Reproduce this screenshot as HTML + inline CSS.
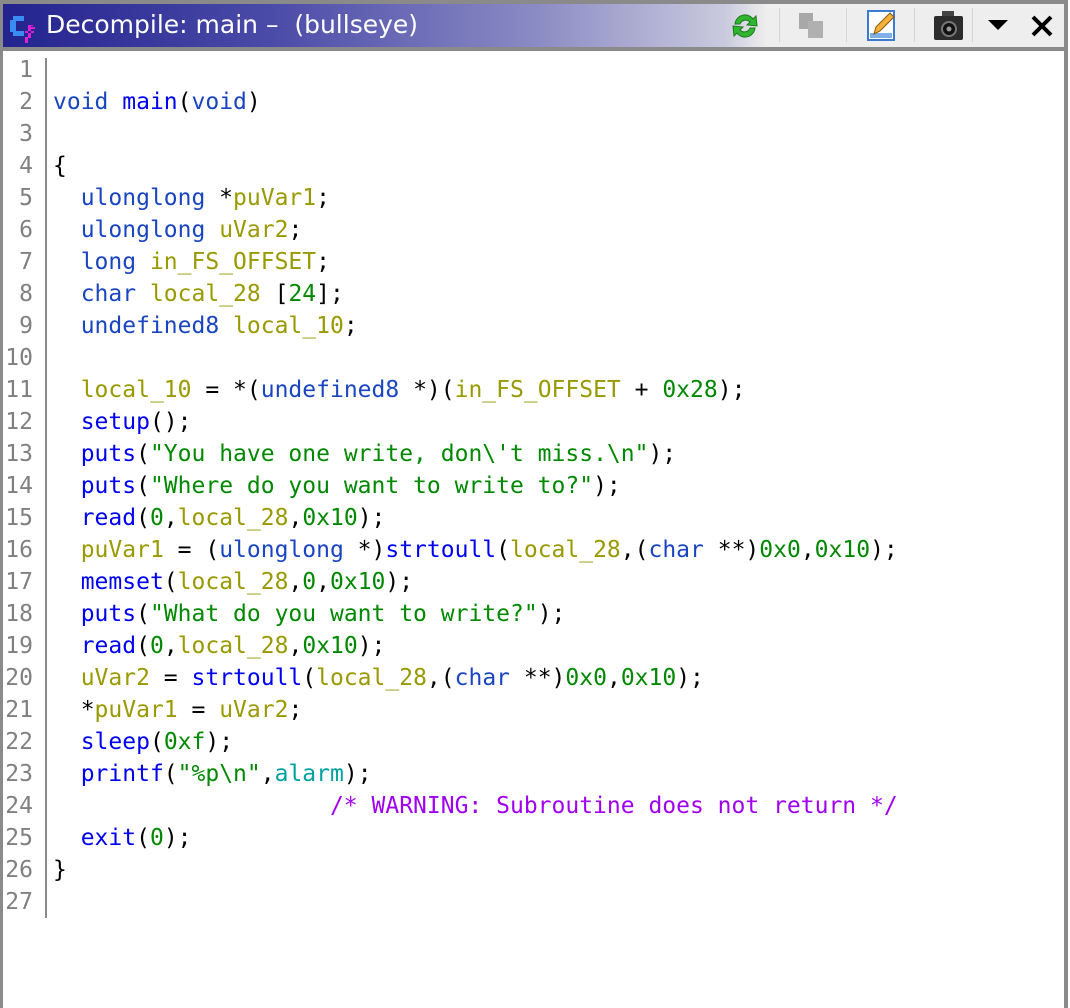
<!DOCTYPE html>
<html><head><meta charset="utf-8">
<style>
html,body{margin:0;padding:0;width:1070px;height:1008px;overflow:hidden;background:#fff;}
.frame{position:absolute;left:0;top:0;width:1070px;height:1008px;background:#fff;overflow:hidden;}
.lb{position:absolute;left:0;top:0;width:3px;height:1008px;background:#8a8a8a;}
.rb{position:absolute;left:1064px;top:0;width:4px;height:1008px;background:#8a8a8a;}
.tb{position:absolute;left:0;top:0;width:1068px;height:4px;background:#8a8a8a;}
.title{position:absolute;left:3px;top:4px;width:1061px;height:43px;
 background:linear-gradient(to right,#23238e 0%,#4a4aa8 25%,#8a8ac4 50%,#c9c9de 68%,#eeeeee 72%,#eeeeee 100%);}
.tline{position:absolute;left:0;top:47px;width:1068px;height:4px;background:#8a8a8a;}
.ttext{position:absolute;left:46px;top:10px;font:25px "DejaVu Sans","Liberation Sans",sans-serif;color:#fff;white-space:pre;line-height:30px;}
.sep{position:absolute;top:8px;width:1px;height:34px;background:#d4d4d4;}
.gutter{position:absolute;left:45px;top:58px;width:2px;height:860px;background:#8a8a8a;}
.code{position:absolute;left:0;top:54px;font:23px "DejaVu Sans Mono","Liberation Mono",monospace;line-height:32px;white-space:pre;color:#000;}
.ln{position:absolute;left:0;width:33px;text-align:right;color:#808080;}
.c{position:absolute;left:53px;}
.t{color:#1a45c0}.f{color:#0000f0}.v{color:#999900}.s{color:#008800}.n{color:#008800}.m{color:#a000f0}.g{color:#00a0a0}
</style></head><body>
<div class="frame">
<div class="title"></div>
<div class="tb"></div><div class="lb"></div><div class="rb"></div><div class="tline"></div>
<svg style="position:absolute;left:5px;top:10px" width="36" height="36" viewBox="0 0 36 36">
<path d="M19 6 H8 V10 H5 V22 H8 V26 H19 V21 H11 V11 H19 Z" fill="#3a8cf2"/>
<path d="M28 15 H23 V28 H26 V19 H30 V17 H26 V16 H28 Z M20 21 H29 V23 H20 Z M20 27 H23 V33 H20 Z" fill="#e020d8"/>
</svg>
<div class="ttext">Decompile: main –  (bullseye)</div>
<svg style="position:absolute;left:728px;top:9px" width="34" height="34" viewBox="0 0 34 34">
<path d="M7 15 A10 10 0 0 1 25 10 L28 7 L29 17 L19 16 L22 13 A6 6 0 0 0 12 15 Z" fill="#2fb52f" stroke="#1a7a1a" stroke-width="1"/>
<path d="M27 19 A10 10 0 0 1 9 24 L6 27 L5 17 L15 18 L12 21 A6 6 0 0 0 22 19 Z" fill="#2fb52f" stroke="#1a7a1a" stroke-width="1"/>
</svg>
<div class="sep" style="left:779px"></div>
<svg style="position:absolute;left:796px;top:10px" width="34" height="32" viewBox="0 0 34 32">
<rect x="3" y="3" width="14" height="16" fill="#a8a8a8"/><rect x="12" y="11" width="15" height="17" fill="#b0b0b0"/>
</svg>
<div class="sep" style="left:846px"></div>
<svg style="position:absolute;left:866px;top:8px" width="34" height="36" viewBox="0 0 34 36">
<rect x="2" y="3" width="26" height="29" fill="#ffffff" stroke="#3a7bd5" stroke-width="2"/>
<rect x="4" y="25" width="22" height="5" fill="#7fb0e8"/>
<path d="M8 26 L10 19 L24 5 L28 9 L14 23 Z" fill="#f3b23a" stroke="#8a5a10" stroke-width="1"/>
</svg>
<div class="sep" style="left:914px"></div>
<svg style="position:absolute;left:932px;top:9px" width="36" height="34" viewBox="0 0 36 34">
<rect x="10" y="2" width="12" height="6" fill="#444"/>
<rect x="2" y="7" width="29" height="24" rx="2" fill="#2c2c2c"/>
<circle cx="17" cy="20" r="7" fill="#111" stroke="#777" stroke-width="2"/>
<circle cx="17" cy="20" r="2.5" fill="#999"/>
</svg>
<div class="sep" style="left:972px"></div>
<svg style="position:absolute;left:986px;top:18px" width="24" height="14" viewBox="0 0 24 14"><path d="M2 2 H22 L12 12 Z" fill="#000"/></svg>
<svg style="position:absolute;left:1030px;top:14px" width="24" height="24" viewBox="0 0 24 24"><path d="M3 3 L21 21 M21 3 L3 21" stroke="#000" stroke-width="4"/></svg>

<div class="gutter"></div>
<div class="code">
<div class="ln" style="top:0">1</div>
<div class="ln" style="top:32px">2</div>
<div class="ln" style="top:64px">3</div>
<div class="ln" style="top:96px">4</div>
<div class="ln" style="top:128px">5</div>
<div class="ln" style="top:160px">6</div>
<div class="ln" style="top:192px">7</div>
<div class="ln" style="top:224px">8</div>
<div class="ln" style="top:256px">9</div>
<div class="ln" style="top:288px">10</div>
<div class="ln" style="top:320px">11</div>
<div class="ln" style="top:352px">12</div>
<div class="ln" style="top:384px">13</div>
<div class="ln" style="top:416px">14</div>
<div class="ln" style="top:448px">15</div>
<div class="ln" style="top:480px">16</div>
<div class="ln" style="top:512px">17</div>
<div class="ln" style="top:544px">18</div>
<div class="ln" style="top:576px">19</div>
<div class="ln" style="top:608px">20</div>
<div class="ln" style="top:640px">21</div>
<div class="ln" style="top:672px">22</div>
<div class="ln" style="top:704px">23</div>
<div class="ln" style="top:736px">24</div>
<div class="ln" style="top:768px">25</div>
<div class="ln" style="top:800px">26</div>
<div class="ln" style="top:832px">27</div>

<div class="c" style="top:32px"><span class="t">void</span> <span class="f">main</span>(<span class="t">void</span>)</div>
<div class="c" style="top:96px">{</div>
<div class="c" style="top:128px">  <span class="t">ulonglong</span> *<span class="v">puVar1</span>;</div>
<div class="c" style="top:160px">  <span class="t">ulonglong</span> <span class="v">uVar2</span>;</div>
<div class="c" style="top:192px">  <span class="t">long</span> <span class="v">in_FS_OFFSET</span>;</div>
<div class="c" style="top:224px">  <span class="t">char</span> <span class="v">local_28</span> [<span class="n">24</span>];</div>
<div class="c" style="top:256px">  <span class="t">undefined8</span> <span class="v">local_10</span>;</div>
<div class="c" style="top:320px">  <span class="v">local_10</span> = *(<span class="t">undefined8</span> *)(<span class="v">in_FS_OFFSET</span> + <span class="n">0x28</span>);</div>
<div class="c" style="top:352px">  <span class="f">setup</span>();</div>
<div class="c" style="top:384px">  <span class="f">puts</span>(<span class="s">"You have one write, don\'t miss.\n"</span>);</div>
<div class="c" style="top:416px">  <span class="f">puts</span>(<span class="s">"Where do you want to write to?"</span>);</div>
<div class="c" style="top:448px">  <span class="f">read</span>(<span class="n">0</span>,<span class="v">local_28</span>,<span class="n">0x10</span>);</div>
<div class="c" style="top:480px">  <span class="v">puVar1</span> = (<span class="t">ulonglong</span> *)<span class="f">strtoull</span>(<span class="v">local_28</span>,(<span class="t">char</span> **)<span class="n">0x0</span>,<span class="n">0x10</span>);</div>
<div class="c" style="top:512px">  <span class="f">memset</span>(<span class="v">local_28</span>,<span class="n">0</span>,<span class="n">0x10</span>);</div>
<div class="c" style="top:544px">  <span class="f">puts</span>(<span class="s">"What do you want to write?"</span>);</div>
<div class="c" style="top:576px">  <span class="f">read</span>(<span class="n">0</span>,<span class="v">local_28</span>,<span class="n">0x10</span>);</div>
<div class="c" style="top:608px">  <span class="v">uVar2</span> = <span class="f">strtoull</span>(<span class="v">local_28</span>,(<span class="t">char</span> **)<span class="n">0x0</span>,<span class="n">0x10</span>);</div>
<div class="c" style="top:640px">  *<span class="v">puVar1</span> = <span class="v">uVar2</span>;</div>
<div class="c" style="top:672px">  <span class="f">sleep</span>(<span class="n">0xf</span>);</div>
<div class="c" style="top:704px">  <span class="f">printf</span>(<span class="s">"%p\n"</span>,<span class="g">alarm</span>);</div>
<div class="c" style="top:736px">                    <span class="m">/* WARNING: Subroutine does not return */</span></div>
<div class="c" style="top:768px">  <span class="f">exit</span>(<span class="n">0</span>);</div>
<div class="c" style="top:800px">}</div>
</div>
</div>
</body></html>
